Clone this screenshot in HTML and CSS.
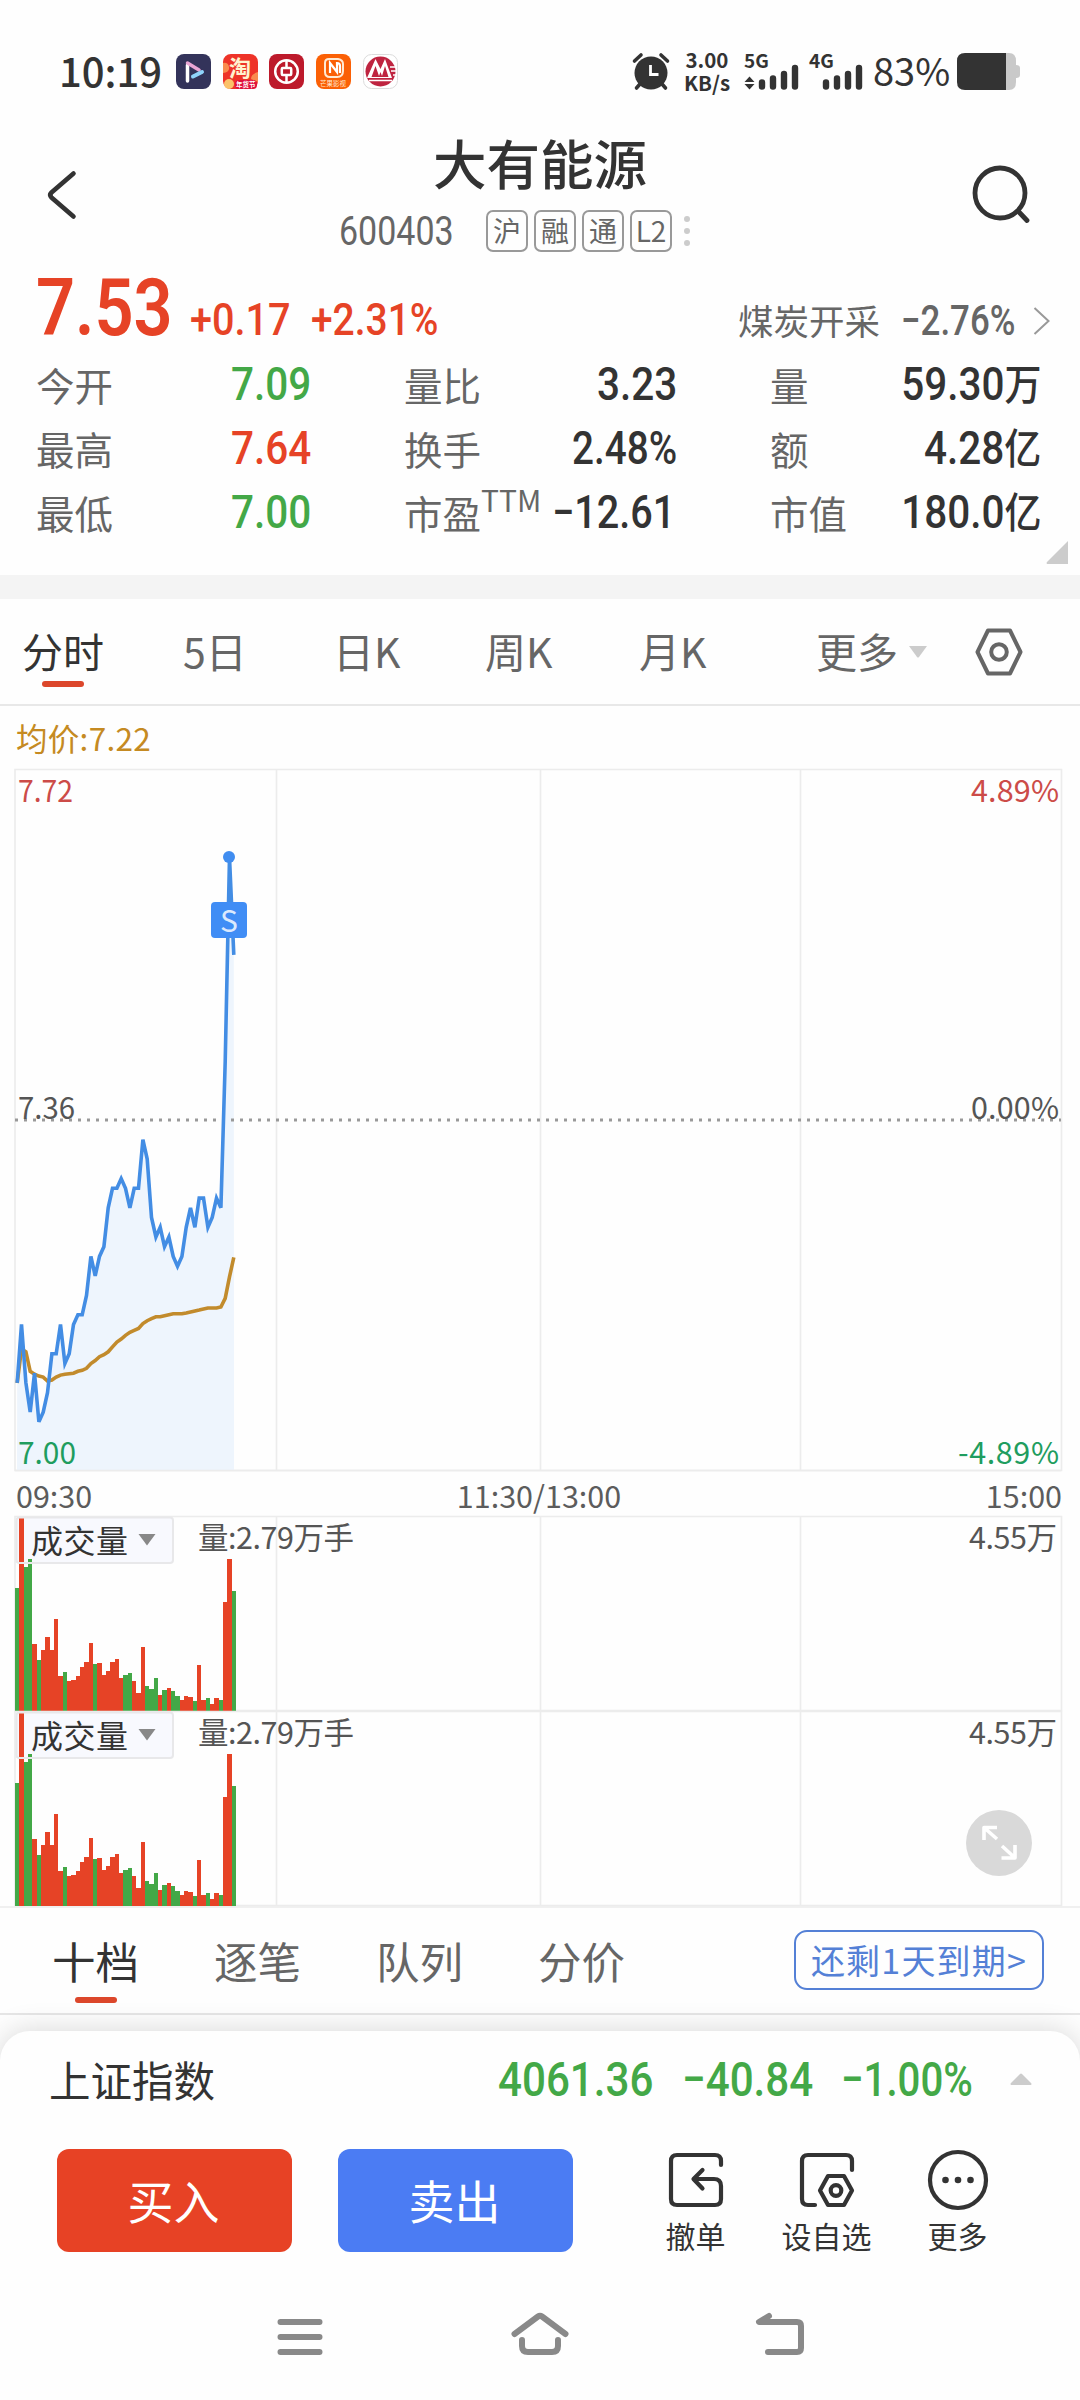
FILE: index.html
```html
<!DOCTYPE html>
<html lang="zh-CN">
<head>
    <meta charset="UTF-8">
    <meta name="viewport" content="width=device-width, initial-scale=1.0">
    <title>大有能源 600403</title>
    <link rel="stylesheet" href="styles.css">
</head>
<body>
    <div class="status-bar">
        <span class="clock">10:19</span>
        <div class="app-icons">
            <svg width="35" height="35" viewBox="0 0 35 35">
                <rect width="35" height="35" rx="8" fill="#33335a"/>
                <path d="M11.500 11V27" stroke="#fff" stroke-width="3.500" stroke-linecap="round"/>
                <path d="M11.500 9L23 16" stroke="#e9a5d4" stroke-width="3.500" stroke-linecap="round"/>
                <path d="M17 22.500L26 18" stroke="#8fd3fb" stroke-width="4" stroke-linecap="round"/>
            </svg>
            <svg width="35" height="35" viewBox="0 0 35 35">
                <rect width="35" height="35" rx="8" fill="#ee3328"/>
                <path d="M0 9q5-1 6 4t-6 6zM35 18q-7 2-7 7l7 3z" fill="#f98b4e"/>
                <circle cx="6" cy="30" r="5" fill="#fbc26a"/>
                <text x="6" y="22" class="tao">淘</text>
                <rect x="12" y="26" width="22" height="9" rx="4" fill="#e0103c"/>
                <text x="13" y="33" class="tao-sub">年货节</text>
            </svg>
            <svg width="35" height="35" viewBox="0 0 35 35">
                <rect width="35" height="35" rx="8" fill="#bd1a2b"/>
                <g fill="none" stroke="#fff" stroke-width="2.500">
                    <circle cx="17.500" cy="17.500" r="11.300"/>
                    <rect x="12.800" y="14" width="9.400" height="7" rx="1"/>
                    <path d="M17.500 6v8M17.500 21v8"/>
                </g>
            </svg>
            <svg width="35" height="35" viewBox="0 0 35 35">
                <rect width="35" height="35" rx="8" fill="#fb6005"/>
                <path d="M9 9Q9 5 13 5H22Q27 6 27 10V17Q27 23 21 23H14Q9 23 9 18Z" fill="none" stroke="#ffe9d2" stroke-width="2"/>
                <path d="M14 19V9L21 18V9Q24 9 24 12V19" fill="none" stroke="#fff" stroke-width="2.200"/>
                <text x="4" y="32" class="mango">芒果影视</text>
            </svg>
            <svg width="35" height="35" viewBox="0 0 35 35">
                <rect x="0.500" y="0.500" width="34" height="34" rx="8" fill="#fff" stroke="#dcdcdc"/>
                <circle cx="17.500" cy="17.500" r="15" fill="#bf2440"/>
                <path d="M4 24L12.500 5L17.500 15L22 5L29 24Z" fill="#fff"/>
                <path d="M8.500 23L12.500 12L16 22L17.500 18L19 22L22 12L25.500 23Z" fill="#bf2440"/>
                <path d="M6 26.500H29M27 13H33M28 17H33M30 21H33" stroke="#fff" stroke-width="1.600"/>
            </svg>
        </div>
        <svg class="alarm" width="38" height="37" viewBox="0 0 38 37">
            <circle cx="19" cy="20" r="16.500" fill="#333"/>
            <path d="M2.500 8L9 2M35.500 8L29 2M8 31L4.500 35M30 31L33.500 35" stroke="#333" stroke-width="3.600" stroke-linecap="round"/>
            <path d="M18.500 12V21.500H26.500" fill="none" stroke="#fff" stroke-width="2.800"/>
        </svg>
        <div class="speed"><b>3.00</b><b>KB/s</b></div>
        <svg class="signal" width="56" height="38" viewBox="0 0 56 38">
            <text x="0" y="15.500" class="net">5G</text>
            <path d="M0.500 30L5.500 24.500L10.500 30ZM0.500 32L5.500 37.500L10.500 32Z" fill="#333"/>
            <path d="M18 30.500V34.500M29 26.500V34.500M40 22V34.500M51 16V34.500" stroke="#333" stroke-width="6.400" stroke-linecap="round"/>
        </svg>
        <svg class="signal second" width="56" height="38" viewBox="0 0 56 38">
            <text x="0" y="15.500" class="net">4G</text>
            <path d="M17 30.500V34.500M28 26.500V34.500M39 22V34.500M50 16V34.500" stroke="#333" stroke-width="6.400" stroke-linecap="round"/>
        </svg>
        <span class="percent">83%</span>
        <svg width="64" height="37" viewBox="0 0 64 37">
            <path d="M48 0H52Q59 0 59 8V12Q63 12 63 15V22Q63 25 59 25V29Q59 37 52 37H48Z" fill="#c9c9c9"/>
            <path d="M8 0H49V37H8Q0 37 0 29V8Q0 0 8 0Z" fill="#333"/>
        </svg>
    </div>

    <div class="header">
        <svg class="back" width="32" height="50" viewBox="0 0 32 50">
            <path d="M27.500 3.500L5.500 22.500Q3 25 5.500 27.500L27.500 46.500" fill="none" stroke="#333" stroke-width="4.600" stroke-linecap="round"/>
        </svg>
        <div class="title">
            <h1>大有能源</h1>
            <div class="code-row">
                <span class="code num">600403</span>
                <span class="tag">沪</span>
                <span class="tag">融</span>
                <span class="tag">通</span>
                <span class="tag">L2</span>
                <svg class="dots" width="6" height="30" viewBox="0 0 6 30" fill="#ccc">
                    <circle cx="3" cy="3" r="3"/><circle cx="3" cy="15" r="3"/><circle cx="3" cy="27" r="3"/>
                </svg>
            </div>
        </div>
        <svg class="search" width="60" height="60" viewBox="0 0 60 60" fill="none" stroke="#333" stroke-width="4.800">
            <circle cx="29" cy="29" r="25"/>
            <path d="M47 47L56 56.500" stroke-linecap="round"/>
        </svg>
    </div>

    <div class="quote">
        <div class="price-row red">
            <span class="price num">7.53</span>
            <span class="change num">+0.17</span>
            <span class="ratio num">+2.31%</span>
            <span class="industry">煤炭开采</span>
            <span class="industry-ratio num">−2.76%</span>
            <svg width="18" height="28" viewBox="0 0 18 28" fill="none" stroke="#999" stroke-width="2"><path d="M1.500 1L15.500 14L1.500 27"/></svg>
        </div>
        <div class="stats">
            <span>今开</span><span class="num green">7.09</span>
            <span>量比</span><span class="num">3.23</span>
            <span>量</span><span class="num">59.30<i>万</i></span>
            <span>最高</span><span class="num red">7.64</span>
            <span>换手</span><span class="num percent-value">2.48%</span>
            <span>额</span><span class="num">4.28<i>亿</i></span>
            <span>最低</span><span class="num green">7.00</span>
            <span>市盈<sup>TTM</sup></span><span class="num pe">−12.61</span>
            <span>市值</span><span class="num">180.0<i>亿</i></span>
        </div>
        <svg class="corner" width="23" height="23" viewBox="0 0 23 23"><path d="M22 0V23H1Q0 22 1 21L21 1Z" fill="#ccc"/></svg>
    </div>

    <div class="period-tabs">
        <span class="active">分时</span>
        <span>5日</span>
        <span>日K</span>
        <span>周K</span>
        <span>月K</span>
        <span>更多</span>
        <svg class="arrow" width="18" height="12" viewBox="0 0 18 12"><path d="M0 0H18L10 11Q9 12 8 11Z" fill="#ccc"/></svg>
        <svg class="setting" width="50" height="50" viewBox="0 0 50 50" fill="none" stroke="#666" stroke-width="4">
            <path d="M14 3.500H36L46.500 25L36 46.500H14L3.500 25Z" stroke-linejoin="round"/>
            <circle cx="25" cy="25" r="7.800"/>
        </svg>
    </div>

    <div class="average">均价:7.22</div>

    <svg id="priceChart" class="chart" width="1080" height="703" viewBox="0 769 1080 703">
        <path d="M15 1470.500V769.500H1061.500V1470.500ZM276.500 769V1470M540.500 769V1470M800.500 769V1470" class="grid"/>
        <polygon id="area" fill="#eef5fd"/>
        <path d="M15 1120H1061" class="zero-line"/>
        <polyline id="avgLine" class="line" stroke="#c28b2c"/>
        <polyline id="priceLine" class="line" stroke="#438de4"/>
        <path d="M15 1470.500H1061" class="grid"/>
        <circle cx="229" cy="857" r="6" fill="#408df0"/>
        <rect x="211" y="902" width="36" height="36" rx="4" fill="#408df5"/>
        <text x="229" y="932" class="mark">S</text>
        <text x="18" y="802" textLength="55" lengthAdjust="spacingAndGlyphs" fill="#cc4b48">7.72</text>
        <text x="971" y="802" textLength="88" fill="#cc4b48">4.89%</text>
        <text x="18" y="1119" textLength="57" lengthAdjust="spacingAndGlyphs" fill="#555">7.36</text>
        <text x="971" y="1119" textLength="88" fill="#555">0.00%</text>
        <text x="18" y="1464" textLength="58" lengthAdjust="spacingAndGlyphs" fill="#1f9d5f">7.00</text>
        <text x="958" y="1464" textLength="101" fill="#1f9d5f">-4.89%</text>
    </svg>

    <div class="time-axis">
        <span>09:30</span>
        <span>11:30/13:00</span>
        <span>15:00</span>
    </div>

    <div id="volumes"></div>

    <div class="depth-tabs">
        <span class="active">十档</span>
        <span>逐笔</span>
        <span>队列</span>
        <span>分价</span>
        <a class="expire">还剩1天到期&gt;</a>
    </div>

    <div class="bottom">
        <div class="index-row">
            <span class="index-name">上证指数</span>
            <span class="num">4061.36</span>
            <span class="num">−40.84</span>
            <span class="num">−1.00%</span>
            <svg width="22" height="12" viewBox="0 0 22 12"><path d="M1 12Q0 11 1 10L10 1Q11 0 12 1L21 10Q22 11 21 12Z" fill="#ccc"/></svg>
        </div>
        <div class="actions">
            <button class="buy">买入</button>
            <button class="sell">卖出</button>
            <div class="action">
                <svg width="60" height="60" viewBox="0 0 60 60">
                    <path d="M55 15V11Q55 5 49 5H11Q5 5 5 11V49Q5 55 11 55H49Q55 55 55 49V36Q55 29 48 29H28M36.500 20L27.500 29L36.500 38.500"/>
                </svg>
                <span>撤单</span>
            </div>
            <div class="action">
                <svg width="60" height="60" viewBox="0 0 60 60">
                    <path d="M55 20V11Q55 5 49 5H11Q5 5 5 11V49Q5 55 11 55H18"/>
                    <path d="M31 26H47L55 40.500L47 55H31L23 40.500Z"/>
                    <circle cx="39" cy="40.500" r="5.300"/>
                </svg>
                <span>设自选</span>
            </div>
            <div class="action">
                <svg width="60" height="60" viewBox="0 0 60 60">
                    <circle cx="30" cy="30" r="28"/>
                    <g fill="#333" stroke="none"><circle cx="17.500" cy="30" r="3.300"/><circle cx="30" cy="30" r="3.300"/><circle cx="42.500" cy="30" r="3.300"/></g>
                </svg>
                <span>更多</span>
            </div>
        </div>
        <div class="nav-bar">
            <svg width="60" height="50" viewBox="0 0 60 50"><path d="M10.500 12H49.500M10.500 27H49.500M10.500 42H49.500"/></svg>
            <svg width="60" height="50" viewBox="0 0 60 50"><path d="M4.500 24L28 6.500Q30 5 32 6.500L55.500 24M12 30V36Q12 42 18 42H42Q48 42 48 36V30"/></svg>
            <svg width="60" height="50" viewBox="0 0 60 50"><path d="M19 6L9 12H47Q51 12 51 16V38Q51 42 47 42H18"/></svg>
        </div>
    </div>

    <script>
        const prices = [7.09, 7.15, 7.09, 7.06, 7.10, 7.05, 7.06, 7.08, 7.12, 7.12, 7.15, 7.11, 7.12, 7.15, 7.16, 7.16, 7.18,
            7.22, 7.20, 7.22, 7.23, 7.27, 7.29, 7.29, 7.30, 7.29, 7.27, 7.29, 7.29, 7.34, 7.32, 7.26, 7.24, 7.25,
            7.23, 7.24, 7.22, 7.21, 7.22, 7.25, 7.27, 7.25, 7.28, 7.28, 7.25, 7.26, 7.28, 7.27, 7.42, 7.63, 7.53];
        const averages = [7.09, 7.125, 7.122, 7.102, 7.099, 7.097, 7.096, 7.092, 7.093, 7.096, 7.098, 7.099, 7.0995, 7.1, 7.102,
            7.103, 7.105, 7.11, 7.113, 7.117, 7.119, 7.122, 7.127, 7.132, 7.135, 7.139, 7.142, 7.144, 7.146, 7.151,
            7.154, 7.156, 7.158, 7.158, 7.159, 7.16, 7.161, 7.161, 7.161, 7.162, 7.163, 7.164, 7.165, 7.166, 7.167,
            7.167, 7.167, 7.168, 7.177, 7.199, 7.219];

        // 每根柱子的高度(px)，正数为涨，负数为跌
        const volumes = [-123, 193, -144, -152, 67, -51, 61, 74, 61, 92, 35, -39, 30, 31, 35, 44, 49, 68, -47, 48, 36, 40, 49, 52,
            33, -36, -38, 30, 18, 64, -25, -22, -33, 16, -21, 23, -20, -15, 11, 15, 14, -10, 46, 11, -13, 7, 13, -11,
            109, 152, -120];

        const step = 4.333;

        function toPoints(list) {
            return list.map((p, i) => (17.2 + i * step).toFixed(1) + ',' + (1470.5 - (p - 7) * 973).toFixed(1)).join(' ');
        }

        document.getElementById('priceLine').setAttribute('points', toPoints(prices));
        document.getElementById('avgLine').setAttribute('points', toPoints(averages));
        document.getElementById('area').setAttribute('points', '17,1470 ' + toPoints(prices) + ' 234,1470');

        function volumePanel(withExpand) {
            let bars = '';
            volumes.forEach((v, i) => {
                const h = Math.abs(v);
                const left = Math.round(15 + i * step);
                const right = Math.round(15 + (i + 1) * step);
                bars += '<rect x="' + left + '" y="' + (195 - h) + '" width="' + (right - left) + '" height="' + h + '" fill="' + (v > 0 ? '#e64326' : '#43a847') + '"/>';
            });
            let expand = '';
            if (withExpand) {
                expand = '<circle cx="999" cy="132" r="33" fill="#d9d9d9"/>' +
                    '<path d="M997 128L984.500 117M984 129V116.500H997M1002 135L1014 146M1015 134V147H1001.500" fill="none" stroke="#fff" stroke-width="3.600" stroke-linejoin="round"/>';
            }
            return '<svg class="chart" width="1080" height="195" viewBox="0 0 1080 195">' +
                '<path d="M15 194.500V0.500H1061.500V194.500ZM276.500 0V195M540.500 0V195M800.500 0V195" class="grid"/>' +
                '<rect x="16" y="1" width="157" height="46" rx="3" fill="#f8f9fe"/>' + bars +
                '<rect x="16.500" y="1.500" width="156.500" height="45.500" rx="3" fill="none" stroke="#e8e8ea" stroke-width="2"/>' +
                '<text x="31" y="37" textLength="97" class="dropdown">成交量</text>' +
                '<path d="M138.500 18H155.500L147 29.500Z" fill="#888"/>' +
                '<text x="198" y="33" textLength="156" fill="#555">量:2.79万手</text>' +
                '<text x="969" y="33" textLength="88" fill="#555">4.55万</text>' + expand + '</svg>';
        }

        document.getElementById('volumes').innerHTML = volumePanel(false) + volumePanel(true);
    </script>
</body>
</html>
```

FILE: styles.css
```css
* {
    box-sizing: border-box;
}
body {
    width: 1080px;
    height: 2400px;
    margin: 0;
    background: #fefefe;
    color: #333;
    font-family: "Noto Sans CJK SC", "Noto Sans", sans-serif;
    overflow: hidden;
}
svg {
    display: block;
    flex: none;
    overflow: visible;
}
/* 窄体数字 */
.num {
    display: inline-block;
    font-family: Roboto, "Noto Sans CJK SC", sans-serif;
    font-weight: 500;
    white-space: nowrap;
    transform: scaleX(0.88);
    transform-origin: left center;
}
.red {
    color: #e64326;
}
.green {
    color: #43a847;
}

/* 状态栏 */
.status-bar {
    display: flex;
    align-items: center;
    height: 110px;
    padding: 32px 59px 0 59px;
}
.clock {
    width: 117px;
    margin-top: -3px;
    font-size: 40px;
    font-weight: 500;
    line-height: 60px;
    white-space: nowrap;
}
.app-icons {
    display: flex;
    gap: 11.7px;
}
.tao {
    font-size: 22px;
    font-weight: 700;
    fill: #fff3cf;
}
.tao-sub {
    font-size: 6.500px;
    font-weight: 700;
    fill: #fff;
}
.mango {
    font-size: 6.500px;
    fill: #ffe9d2;
}
.alarm {
    margin-left: auto;
}
.speed {
    display: flex;
    flex-direction: column;
    width: 50px;
    margin-left: 12px;
    font-size: 20.500px;
    line-height: 23px;
    text-align: center;
}
.signal {
    margin-left: 12px;
}
.signal.second {
    margin-left: 9px;
}
.net {
    font-size: 19px;
    font-weight: 700;
    fill: #333;
}
.percent {
    width: 84px;
    margin: -3px 0 0 8px;
    font-size: 38px;
    line-height: 56px;
}

/* 标题 */
.header {
    display: flex;
    height: 156px;
}
.back {
    margin: 60px 262px 0 46px;
}
.title {
    width: 400px;
}
.title h1 {
    margin: 22px 0 0;
    font-size: 53.500px;
    font-weight: 500;
    line-height: 60px;
    text-align: center;
}
.code-row {
    display: flex;
    align-items: center;
    gap: 6px;
    height: 42px;
    margin: 18px 0 0 -1px;
    color: #666;
}
.code {
    width: 141px;
    font-size: 40px;
    font-weight: 400;
    transform: scaleX(0.85);
}
.tag {
    width: 42px;
    height: 42px;
    border: 2px solid #999;
    border-radius: 7px;
    font-size: 28px;
    line-height: 37px;
    text-align: center;
}
.dots {
    margin-left: 6px;
}
.search {
    margin: 54px 0 0 231px;
}

/* 行情 */
.quote {
    height: 333px;
    border-bottom: 24px solid #f4f4f4;
}
.price-row {
    display: flex;
    align-items: baseline;
    height: 86px;
    padding-left: 36px;
    line-height: 84px;
}
.price {
    width: 154px;
    font-size: 80px;
    font-weight: 600;
    transform: scaleX(0.855);
}
.change {
    width: 121px;
    font-size: 45px;
}
.ratio {
    width: 427px;
    font-size: 45px;
    transform: scaleX(0.865);
}
.industry {
    width: 163px;
    color: #666;
    font-size: 35.500px;
}
.industry-ratio {
    width: 132px;
    color: #666;
    font-size: 42px;
    transform: scaleX(0.83);
}
.stats {
    display: grid;
    grid-template-columns: 100px 268px 100px 266px 100px 171px;
    grid-auto-rows: 64px;
    margin-left: 36px;
    color: #666;
    font-size: 38.500px;
    line-height: 64px;
    white-space: nowrap;
}
.stats .num {
    justify-self: end;
    margin-right: 93px;
    color: #333;
    font-size: 46px;
    transform-origin: right center;
}
.stats .num:nth-child(6n) {
    margin-right: 0;
}
.stats .green {
    color: #43a847;
}
.stats .red {
    color: #e64326;
}
.stats .percent-value {
    transform: scaleX(0.84);
}
.stats .pe {
    margin-right: 95px;
    transform: scaleX(0.86);
}
.stats i {
    font-size: 42px;
    font-style: normal;
    line-height: 40px;
}
.stats sup {
    font-size: 30px;
    line-height: 0;
    vertical-align: 17px;
}
.corner {
    margin: -3px 0 0 1046px;
}

/* 周期 */
.period-tabs {
    display: flex;
    align-items: center;
    height: 107px;
    padding: 0 0 0 22px;
    border-bottom: 2px solid #e8e8e8;
    color: #666;
    font-size: 41px;
}
.period-tabs span {
    width: 154px;
    padding-bottom: 3px;
}
.period-tabs .active,
.depth-tabs .active {
    position: relative;
    color: #333;
}
.period-tabs span:first-child {
    width: 161px;
}
.period-tabs span:nth-child(2) {
    width: 150px;
}
.period-tabs span:nth-child(3) {
    width: 152px;
}
.period-tabs span:nth-child(5) {
    width: 177px;
}
.period-tabs span:nth-child(6) {
    width: 93px;
}
.active::after {
    content: "";
    position: absolute;
    left: 20px;
    bottom: -4px;
    width: 42px;
    height: 6px;
    border-radius: 3px;
    background: #dc472b;
}
.setting {
    margin-left: 47px;
}

/* 图表 */
.average {
    height: 63px;
    padding-left: 16px;
    color: #c58a22;
    font-size: 31.500px;
    letter-spacing: 0.3px;
    line-height: 62px;
}
.chart {
    font-size: 30.500px;
}
.grid {
    fill: none;
    stroke: #ececec;
    stroke-width: 1.600;
}
.zero-line {
    stroke: #999;
    stroke-width: 3;
    stroke-dasharray: 3 6;
}
.line {
    fill: none;
    stroke-width: 3.600;
}
.mark {
    font-size: 30px;
    fill: #dbe9fd;
    text-anchor: middle;
}
.dropdown {
    font-size: 32px;
    fill: #333;
}
.time-axis {
    display: grid;
    grid-template-columns: 1fr auto 1fr;
    height: 44px;
    padding: 0 18px 0 16px;
    color: #5c5c5c;
    font-size: 30.500px;
    line-height: 46px;
}
.time-axis span:last-child {
    text-align: right;
}

/* 盘口 */
.depth-tabs {
    display: flex;
    align-items: center;
    height: 109px;
    padding-left: 52px;
    border-top: 2px solid #f0f0f0;
    border-bottom: 2px solid #e6e6e6;
    color: #666;
    font-size: 43.500px;
}
.depth-tabs span {
    width: 162px;
    padding-bottom: 1px;
}
.depth-tabs .active::after {
    left: 23px;
    bottom: -10px;
}
.expire {
    width: 250px;
    height: 60px;
    margin: 0 0 2px 94px;
    border: 2px solid #5480d6;
    border-radius: 13px;
    color: #5480d6;
    font-size: 34px;
    line-height: 55px;
    text-align: center;
    white-space: nowrap;
    letter-spacing: 1.200px;
}
.bottom {
    position: relative;
    height: 369px;
    margin-top: 16px;
    border-radius: 30px 30px 0 0;
    background: #fefefe;
    box-shadow: 0 0 30px rgba(0, 0, 0, 0.16);
}
.index-row {
    display: flex;
    align-items: center;
    height: 96px;
    padding-left: 49px;
    color: #43a847;
    font-size: 49px;
}
.index-name {
    width: 449px;
    color: #333;
    font-size: 41.500px;
}
.index-row .num {
    width: 184px;
    font-weight: 500;
    transform: scaleX(0.86);
}
.index-row .num + .num {
    width: 159px;
}
.index-row .num + .num + .num {
    width: 169px;
    transform: scaleX(0.82);
}
.actions {
    display: flex;
    height: 145px;
    padding: 22px 0 0 57px;
}
button {
    width: 235px;
    height: 103px;
    margin-right: 46px;
    padding: 0 2px 4px 0;
    border: 0;
    border-radius: 12px;
    color: #fff;
    font-family: inherit;
    font-size: 46px;
}
.buy {
    background: #e74225;
}
.sell {
    background: #4b7cf3;
}
.action {
    width: 131px;
    margin-right: 0;
    text-align: center;
    font-size: 30px;
    line-height: 44px;
}
.action svg {
    margin: 1px auto 3px;
    fill: none;
    stroke: #333;
    stroke-width: 4.200;
    stroke-linecap: round;
    stroke-linejoin: round;
}
.sell + .action {
    margin-left: 11px;
}
.nav-bar {
    display: flex;
    justify-content: center;
    gap: 180px;
    padding-top: 38px;
}
.nav-bar svg {
    fill: none;
    stroke: #898989;
    stroke-width: 6;
    stroke-linecap: round;
    stroke-linejoin: round;
}
```
